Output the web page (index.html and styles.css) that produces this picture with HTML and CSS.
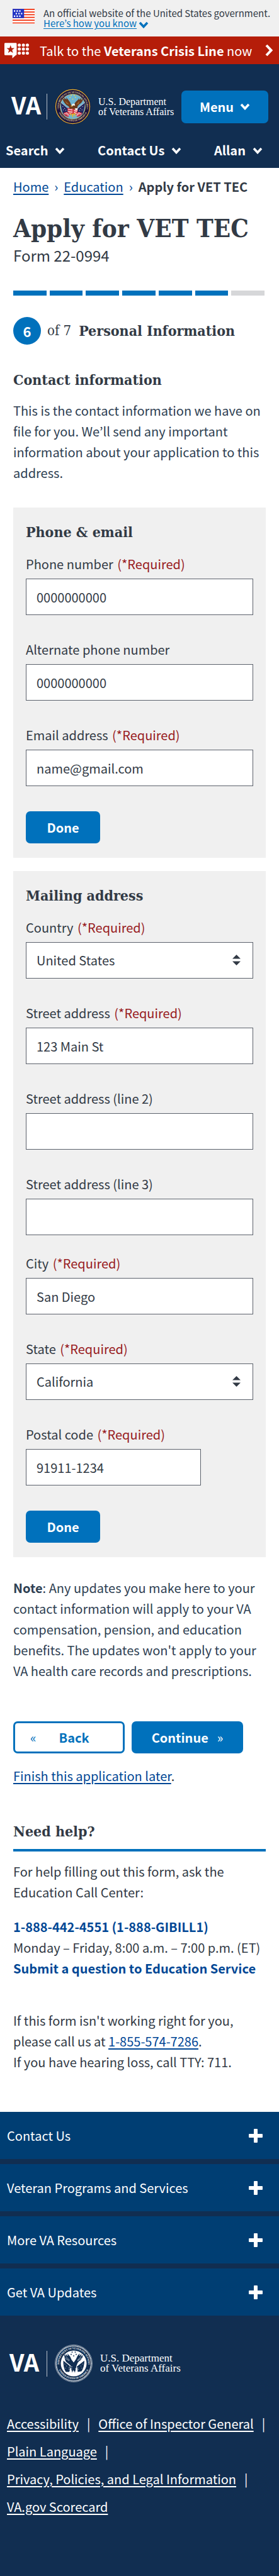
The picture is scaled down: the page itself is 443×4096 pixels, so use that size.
FILE: index.html
```html
<!DOCTYPE html>
<html lang="en">
<head>
<meta charset="utf-8">
<meta name="viewport" content="width=device-width, initial-scale=1">
<title>Apply for VET TEC | Veterans Affairs</title>
<link rel="stylesheet" href="styles.css">
</head>
<body>
<svg class="defs" width="0" height="0" aria-hidden="true">
  <defs>
    <symbol id="chevron" viewBox="0 0 16 11"><path d="M2 2l6 6.500l6-6.500" fill="none" stroke="currentColor" stroke-width="3.600"/></symbol>
    <symbol id="plus" viewBox="0 0 22 22"><path d="M9 0h4a1 1 0 0 1 1 1v7h7a1 1 0 0 1 1 1v4a1 1 0 0 1-1 1h-7v7a1 1 0 0 1-1 1H9a1 1 0 0 1-1-1v-7H1a1 1 0 0 1-1-1V9a1 1 0 0 1 1-1h7V1a1 1 0 0 1 1-1z" fill="currentColor"/></symbol>
    <symbol id="sort" viewBox="0 0 13 17"><path d="M6.500 0L13 6.500H0zM0 10.500h13L6.500 17z" fill="currentColor"/></symbol>
    <symbol id="star" viewBox="-5 -5 10 10"><path d="M0-5l1.200 3.500h3.600L1.900.7 3 4.200 0 2.100-3 4.200-1.900.7-4.800-1.500h3.600z" fill="currentColor"/></symbol>
    <path id="ring-top" d="M17.500 78A46 46 0 1 1 102.500 78"/>
    <path id="ring-bottom" d="M9 68A52 52 0 0 0 111 68"/>
  </defs>
</svg>

<div class="gov">
  <svg class="flag" viewBox="0 0 50 34" aria-hidden="true">
    <path fill="#fff" d="M0 0h50v34H0z"/>
    <path stroke="#f12f0b" stroke-width="2.400" d="M0 1.200h50M0 7.200h50M0 13.200h50M0 19.200h50M0 25.800h50M0 32h50"/>
    <path fill="#2234c4" d="M0 0h26v21H0z"/>
    <path fill="#fff" d="M3 3h3v3.500H3zM9 3h3v3.500H9zM15 3h3v3.500h-3zM7 9h3v3.500H7zM13 9h3v3.500h-3zM19 9h3v3.500h-3zM3 15h3v3.500H3zM9 15h3v3.500H9zM15 15h3v3.500h-3z"/>
  </svg>
  <p class="gov-text">An official website of the United States government.<br>
    <a class="gov-link" href="#about">Here’s how you know</a><svg class="gov-chevron" aria-hidden="true"><use href="#chevron"/></svg></p>
</div>

<a class="crisis" href="#crisis">
  <svg class="crisis-icon" viewBox="0 0 56 35" aria-hidden="true">
    <path fill="#fff" d="M2 0h24a2 2 0 0 1 2 2v24a2 2 0 0 1-2 2l-8 7v-7H2a2 2 0 0 1-2-2V2a2 2 0 0 1 2-2z"/>
    <path fill="#b51d09" d="M14 5l2.300 6.800H23l-5.400 4.200 2 7L14 19l-5.600 4 2-7L5 11.800h6.700z"/>
    <g fill="#fff"><circle cx="34" cy="5" r="3.600"/><circle cx="43.300" cy="5" r="3.600"/><circle cx="52.400" cy="5" r="3.600"/><circle cx="34" cy="14" r="3.600"/><circle cx="43.300" cy="14" r="3.600"/><circle cx="52.400" cy="14" r="3.600"/><circle cx="34" cy="23.200" r="3.600"/><circle cx="43.300" cy="23.200" r="3.600"/><circle cx="52.400" cy="23.200" r="3.600"/></g>
  </svg>
  <span class="crisis-text">Talk to the <strong>Veterans Crisis Line</strong> now</span>
  <svg class="crisis-arrow" viewBox="0 0 13 20" aria-hidden="true"><path d="M2 2l7.500 8L2 18" fill="none" stroke="#fff" stroke-width="4"/></svg>
</a>

<header class="header">
  <div class="header-row">
    <a class="logo" href="#home">
      <span class="va">VA</span>
      <svg class="seal" viewBox="0 0 120 120" aria-hidden="true">
        <circle cx="60" cy="60" r="59.500" fill="#1b1340"/>
        <circle cx="60" cy="60" r="57" fill="none" stroke="#e3b42f" stroke-width="2.600"/>
        <circle cx="60" cy="60" r="42" fill="#6db3d3" stroke="#d9b343" stroke-width="1.600"/>
        <g class="seal-ring" fill="#f0dc93"><text><textPath href="#ring-top" startOffset="50%" text-anchor="middle">DEPARTMENT OF VETERANS AFFAIRS</textPath></text>
        <text><textPath href="#ring-bottom" startOffset="50%" text-anchor="middle">UNITED STATES OF AMERICA</textPath></text></g>
        <circle cx="11" cy="67" r="1.400" fill="#f0dc93"/><circle cx="109" cy="67" r="1.400" fill="#f0dc93"/>
        <g color="#f6dc4b"><use href="#star" x="52" y="19" width="6" height="6"/><use href="#star" x="62" y="19" width="6" height="6"/><use href="#star" x="48" y="26" width="6" height="6"/><use href="#star" x="66" y="26" width="6" height="6"/><use href="#star" x="57" y="32" width="6" height="6"/></g>
        <path fill="#23275f" d="M20 46l30 24-5 22-16-6q-9-16-9-40zM101 46L72 70l4 22 16-6q8-16 9-40z"/>
        <g fill="#fff"><circle cx="27" cy="60" r="1.200"/><circle cx="33" cy="66" r="1.200"/><circle cx="29" cy="71" r="1.200"/><circle cx="37" cy="72" r="1.200"/><circle cx="93" cy="60" r="1.200"/><circle cx="86" cy="66" r="1.200"/><circle cx="91" cy="71" r="1.200"/><circle cx="83" cy="72" r="1.200"/></g>
        <path fill="none" stroke="#e8e4d8" stroke-width="1.500" d="M20 46l34 28M101 46L68 72"/>
        <path fill="#c6283b" d="M28 82q12-8 22 0l-4 12q-12 0-18-12zM92 82q-12-8-22 0l4 12q12 0 18-12z"/>
        <path fill="none" stroke="#fff" stroke-width="2" d="M31 84q8-3 14 6M37 80q8 1 10 10M89 84q-8-3-14 6M83 80q-8 1-10 10"/>
        <path fill="#6b3a1c" d="M25 31q3 4 8 5l-4-8q6 6 11 8l-3-8q7 8 11 13 5 6 6 12l3 5 8-2q0-8 6-13 7-5 11-13l-2 8q7-4 10-9l-3 9q5-2 8-6-1 14-14 21-5 4-6 12-6 14-15 12-10-3-13-17-16-7-22-29z"/>
        <path fill="#a2652f" d="M34 40l14 12-8-1zM83 40L72 53l8-2zM53 64l7 8 7-8-3 14h-6z"/>
        <path fill="#f5f1e9" d="M57 53q6-5 10-1l1 5-6-1-5 4z"/><path fill="#e6b529" d="M57 55l-5 4 6 1z"/>
        <path fill="#d22f3c" d="M43 63q8 5 16 4l6 2 13 2-5 15H48q-8-9-5-23z"/>
        <path fill="none" stroke="#fff" stroke-width="2.300" d="M44 69q9 3 15 0M43 75q8 4 16-1M47 81q6 2 12-3M64 72l10 6M64 78l9 6"/>
        <path fill="#f0f0ef" d="M68 65l9 1-2 8-7-2z"/><path fill="#e4b62d" d="M56 84l4 15 3-15 5 12 1-14zM50 84l5 10-1-12z"/>
      </svg>
      <span class="dept">U.S. Department<br>of Veterans Affairs</span>
    </a>
    <button class="menu" type="button">Menu <svg class="chevron" aria-hidden="true"><use href="#chevron"/></svg></button>
  </div>
  <nav class="nav" aria-label="Account">
    <button class="nav-item" type="button">Search <svg class="chevron" aria-hidden="true"><use href="#chevron"/></svg></button>
    <button class="nav-item" type="button">Contact Us <svg class="chevron" aria-hidden="true"><use href="#chevron"/></svg></button>
    <button class="nav-item" type="button">Allan <svg class="chevron" aria-hidden="true"><use href="#chevron"/></svg></button>
  </nav>
</header>

<main class="main">
  <nav class="crumbs" aria-label="Breadcrumb">
    <a href="#home">Home</a><span class="sep">›</span><a href="#education">Education</a><span class="sep">›</span><strong>Apply for VET TEC</strong>
  </nav>
  <h1 class="title">Apply for VET TEC</h1>
  <p class="form-no">Form 22-0994</p>
  <div class="progress" role="progressbar" aria-label="Form progress" aria-valuenow="6" aria-valuemin="0" aria-valuemax="7">
    <span class="seg done"></span><span class="seg done"></span><span class="seg done"></span><span class="seg done"></span><span class="seg done"></span><span class="seg done"></span><span class="seg"></span>
  </div>
  <div class="step">
    <span class="step-no">6</span>
    <span class="step-of">of 7</span>
    <h2 class="heading">Personal Information</h2>
  </div>
  <h3 class="heading contact-heading">Contact information</h3>
  <p class="intro">This is the contact information we have on file for you. We’ll send any important information about your application to this address.</p>

  <form class="cards">
    <section class="card">
      <h4 class="heading card-title">Phone &amp; email</h4>
      <div class="fields">
        <div class="field"><label for="phone">Phone number <span class="req">(*Required)</span></label><input id="phone" type="tel" value="0000000000"></div>
        <div class="field"><label for="alt">Alternate phone number</label><input id="alt" type="tel" value="0000000000"></div>
        <div class="field"><label for="email">Email address <span class="req">(*Required)</span></label><input id="email" type="email" value="name@gmail.com"></div>
      </div>
      <button class="btn done-btn" type="button">Done</button>
    </section>
    <section class="card">
      <h4 class="heading card-title">Mailing address</h4>
      <div class="fields">
        <div class="field"><label for="country">Country <span class="req">(*Required)</span></label>
          <div class="select"><select id="country"><option>United States</option></select><svg class="sort" aria-hidden="true"><use href="#sort"/></svg></div></div>
        <div class="field"><label for="street1">Street address <span class="req">(*Required)</span></label><input id="street1" type="text" value="123 Main St"></div>
        <div class="field"><label for="street2">Street address (line 2)</label><input id="street2" type="text"></div>
        <div class="field"><label for="street3">Street address (line 3)</label><input id="street3" type="text"></div>
      </div>
      <div class="fields locality">
        <div class="field"><label for="city">City <span class="req">(*Required)</span></label><input id="city" type="text" value="San Diego"></div>
        <div class="field"><label for="state">State <span class="req">(*Required)</span></label>
          <div class="select"><select id="state"><option>California</option></select><svg class="sort" aria-hidden="true"><use href="#sort"/></svg></div></div>
        <div class="field"><label for="zip">Postal code <span class="req">(*Required)</span></label><input id="zip" class="short" type="text" value="91911-1234"></div>
      </div>
      <button class="btn done-btn" type="button">Done</button>
    </section>
  </form>

  <p class="note"><strong>Note</strong>: Any updates you make here to your contact information will apply to your VA compensation, pension, and education benefits. The updates won't apply to your VA health care records and prescriptions.</p>
  <div class="actions">
    <button class="btn back" type="button"><span class="quo">«</span><span class="back-label">Back</span></button>
    <button class="btn next" type="button">Continue <span class="quo">»</span></button>
  </div>
  <p class="finish"><a href="#later">Finish this application later</a>.</p>

  <section class="help">
    <h2 class="heading help-title">Need help?</h2>
    <p class="help-intro">For help filling out this form, ask the Education Call Center:</p>
    <p class="help-contact"><a href="tel:18884424551">1-888-442-4551 (1-888-GIBILL1)</a><br>Monday – Friday, 8:00 a.m. – 7:00 p.m. (ET)<br><a href="#ask">Submit a question to Education Service</a></p>
    <p class="help-tech">If this form isn't working right for you, please call us at <a href="tel:18555747286">1-855-574-7286</a>.<br>If you have hearing loss, call TTY: 711.</p>
  </section>
</main>

<footer class="footer">
  <div class="accordion">
    <button class="acc" type="button">Contact Us<svg class="plus" aria-hidden="true"><use href="#plus"/></svg></button>
    <button class="acc" type="button">Veteran Programs and Services<svg class="plus" aria-hidden="true"><use href="#plus"/></svg></button>
    <button class="acc" type="button">More VA Resources<svg class="plus" aria-hidden="true"><use href="#plus"/></svg></button>
    <button class="acc" type="button">Get VA Updates<svg class="plus" aria-hidden="true"><use href="#plus"/></svg></button>
  </div>
  <a class="logo footer-logo" href="#home">
    <span class="va">VA</span>
    <svg class="seal" viewBox="0 0 120 120" aria-hidden="true">
      <circle cx="60" cy="60" r="59" fill="none" stroke="#fff" stroke-width="1"/>
      <circle cx="60" cy="60" r="55.500" fill="none" stroke="#fff" stroke-width="3.500" stroke-dasharray="2.600 1.300"/>
      <circle cx="60" cy="60" r="41" fill="#fff"/>
      <g class="seal-ring" fill="#fff"><text><textPath href="#ring-top" startOffset="50%" text-anchor="middle">DEPARTMENT OF VETERANS AFFAIRS</textPath></text>
      <text><textPath href="#ring-bottom" startOffset="50%" text-anchor="middle">UNITED STATES OF AMERICA</textPath></text></g>
      <g color="#112e51"><use href="#star" x="52" y="21" width="6" height="6"/><use href="#star" x="62" y="21" width="6" height="6"/><use href="#star" x="49" y="28" width="6" height="6"/><use href="#star" x="65" y="28" width="6" height="6"/><use href="#star" x="57" y="33" width="6" height="6"/></g>
      <g fill="#112e51"><path d="M27 50l24 19-5 18-11 0q-9-14-8-37zM94 50L70 69l3 18 12-2q9-14 9-35z"/>
      <path d="M30 31l7 6-3-8 8 8-2-9q9 8 13 20l7 9 7-10q4-12 12-19l-1 9 7-8-2 9 6-5q0 13-12 20-5 4-7 12-3 9-6 25l-5-9-4 9-4-16-5-9q-15-7-16-34z"/></g>
      <path fill="none" stroke="#fff" stroke-width="1.300" d="M35 38l12 12M33 43l13 9M84 38L72 50M86 43l-14 9M44 73l11 4M44 78l11 4M46 69l10 2M65 77l10-3M66 82l10-3M55 85l2 10M64 85l-1 10"/>
      <path fill="none" stroke="#fff" stroke-width="2.500" d="M24 47l26 21M97 47L69 69"/>
      <g fill="#fff"><circle cx="32" cy="62" r="1"/><circle cx="37" cy="68" r="1"/><circle cx="34" cy="75" r="1"/><circle cx="88" cy="62" r="1"/><circle cx="83" cy="68" r="1"/><circle cx="86" cy="75" r="1"/></g>
    </svg>
    <span class="dept">U.S. Department<br>of Veterans Affairs</span>
  </a>
  <ul class="links">
    <li><a href="#accessibility">Accessibility</a></li>
    <li><a href="#oig">Office of Inspector General</a></li>
    <li><a href="#plain">Plain Language</a></li>
    <li><a href="#privacy">Privacy, Policies, and Legal Information</a></li>
    <li><a href="#scorecard">VA.gov Scorecard</a></li>
  </ul>
</footer>
</body>
</html>
```

FILE: styles.css
```css
:root {
  --sans: "Noto Sans CJK KR", "Noto Sans", sans-serif;
  --slab: "DejaVu Serif Condensed", "DejaVu Serif", serif;
  --blue: #0071bc;
  --link: #004795;
  --navy: #112e51;
  --ink: #323a45;
}
* { box-sizing: border-box; }
body {
  margin: 0;
  background: #fff;
  color: var(--ink);
  font: 20px/33px var(--sans);
}
h1, h2, h3, h4, p, ul { margin: 0; padding: 0; }
button, input, select { font: inherit; color: inherit; margin: 0; border-radius: 0; }
button { border: 0; background: none; padding: 0; cursor: pointer; }
svg { display: block; flex: none; }
.defs { position: absolute; }
a { color: var(--link); }

.gov { display: flex; gap: 14px; padding: 13px 10px 13px 20px; background: #f0f0f0; }
.flag { width: 35px; height: 24px; margin-top: 1px; }
.gov-text { font-size: 15px; line-height: 16px; white-space: nowrap; }
.gov-link { color: var(--blue); text-underline-offset: 2px; }
.gov-chevron { display: inline-block; width: 16px; height: 11px; margin-left: 3px; color: var(--blue); vertical-align: -2px; }

.crisis {
  display: flex; align-items: center; height: 44px; padding: 0 9px 0 7px;
  background: #b51d09; color: #fff; text-decoration: none; white-space: nowrap;
}
.crisis-icon { width: 39px; height: 25px; margin-right: 17px; }
.crisis-text { flex: 1; }
.crisis-arrow { width: 13px; height: 20px; }

.header { background: var(--navy); color: #fff; padding: 39px 0 15px; }
.header-row { display: flex; align-items: center; justify-content: space-between; padding: 0 17px 0 18px; }
.logo { display: flex; align-items: center; color: #fff; text-decoration: none; white-space: nowrap; }
.va { width: 57px; padding-bottom: 7px; border-right: 1px solid #b8c0cb; font-size: 38px; line-height: 34px; font-weight: 700; }
.seal { width: 57px; height: 57px; margin: 0 12px; }
.seal-ring { font: 700 8px "Liberation Serif", serif; }
.dept { font: 16px/16px "Liberation Serif", serif; }
.menu {
  display: flex; align-items: center; justify-content: center; gap: 10px;
  width: 138px; height: 52px; border-radius: 7px; background: var(--blue); font-weight: 700;
}
.chevron { width: 16px; height: 11px; }
.nav { display: flex; justify-content: space-between; margin-top: 28px; padding: 0 26px 0 9px; }
.nav-item { display: flex; align-items: center; gap: 11px; line-height: 26px; font-weight: 700; }

.main { padding: 17px 21px 63px; }
.crumbs { display: flex; line-height: 26px; white-space: nowrap; }
.crumbs a, .finish a, .help-tech a { text-underline-offset: 3px; }
.sep { width: 24px; text-align: center; color: var(--link); }
.title { margin-top: 31px; font: 700 40px/44px var(--slab); white-space: nowrap; }
.form-no { margin-top: 5px; font-size: 24px; line-height: 32px; }
.progress { display: grid; grid-template-columns: repeat(7, 1fr); gap: 5px; margin: 40px 2px 0 0; }
.seg { height: 8px; background: #d6d7d9; }
.seg.done { background: var(--blue); }
.step { display: flex; align-items: center; margin-top: 34px; white-space: nowrap; }
.step-no {
  width: 44px; height: 44px; margin-right: 10px; border-radius: 50%;
  background: var(--blue); color: #fff; font-size: 22px; line-height: 44px; font-weight: 700; text-align: center;
}
.step-of { margin-right: 12px; font: 22px/30px var(--slab); }
.heading { font: 700 23px/30px var(--slab); }
.contact-heading { margin-top: 41px; }
.intro { margin-top: 17px; color: #2e4052; }

.cards { display: grid; gap: 21px; margin-top: 39px; }
.card { padding: 24px 20px 23px; background: #f0f0f0; }
.fields { display: grid; gap: 42px; margin-top: 23px; }
.fields.locality { margin-top: 32px; }
.field { display: grid; gap: 10px; line-height: 26px; }
.req { margin-left: 2px; color: #981b1e; }
input, select {
  width: 100%; height: 58px; padding: 0 16px; border: 1px solid #5b616b;
  background: #fff; appearance: none;
}
input.short { width: 77%; }
.select { position: relative; }
.sort { position: absolute; top: 20px; right: 20px; width: 13px; height: 17px; pointer-events: none; }
.btn { height: 51px; border-radius: 7px; background: var(--blue); color: #fff; font-weight: 700; }
.done-btn { display: block; width: 118px; margin-top: 40px; }

.note { margin-top: 32px; color: #2e4052; }
.actions { display: flex; gap: 11px; margin-top: 64px; }
.actions .btn { display: flex; align-items: center; justify-content: center; width: 177px; }
.actions .back { justify-content: flex-start; padding-left: 24px; border: 3px solid var(--blue); background: #fff; color: var(--blue); }
.quo { font-weight: 400; }
.back-label { margin-left: 36px; }
.actions .next { gap: 14px; }
.finish { margin-top: 19px; }

.help { margin-top: 57px; }
.help-title { padding-bottom: 13px; border-bottom: 4px solid var(--blue); }
.help-intro { margin-top: 15px; }
.help-contact { margin-top: 22px; white-space: nowrap; }
.help-contact a { font-weight: 700; text-decoration: none; }
.help-tech { margin-top: 50px; }

.footer { background: var(--navy); color: #fff; padding-bottom: 88px; }
.accordion { display: grid; gap: 8px; }
.acc {
  display: flex; align-items: center; justify-content: space-between;
  height: 75px; padding: 0 26px 0 11px; background: #003e73; text-align: left;
}
.plus { width: 22px; height: 22px; }
.footer-logo { margin: 46px 0 44px; padding-left: 15px; }
.footer-logo .va { width: 60px; }
.footer-logo .seal { width: 60px; height: 60px; }
.footer-logo .dept { font-size: 17px; }
.links { display: flex; flex-wrap: wrap; padding-left: 11px; list-style: none; line-height: 44px; white-space: nowrap; }
.links a { color: #fff; text-underline-offset: 3px; }
.links li:not(:last-child)::after { content: "|"; margin: 0 13px; }
```
